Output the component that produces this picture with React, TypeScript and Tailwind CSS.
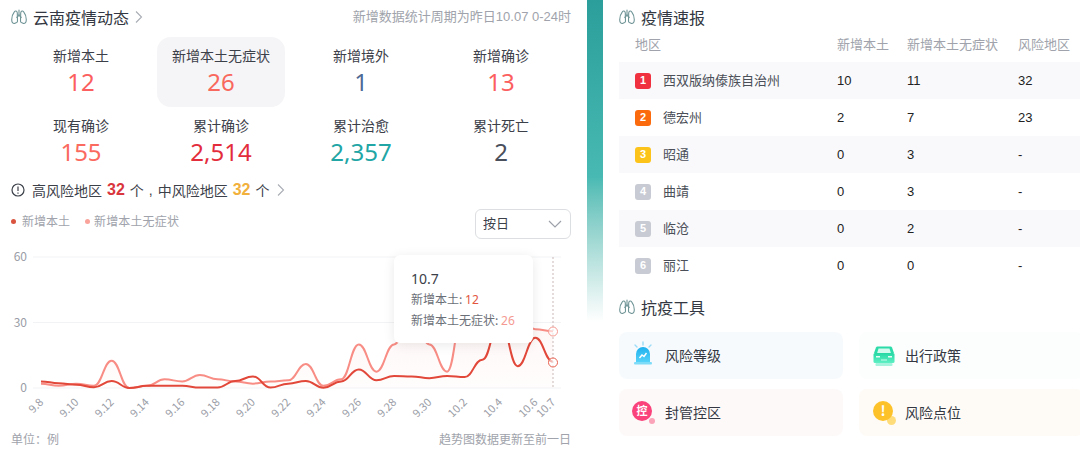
const lineData = {
  dark: [3, 2.2, 1.5, 0.3, 3.2, 0, 1, 1, 1, 0.2, 0.2, 3.2, 5.3, 0.2, 2, 3.2, 0.1, 3, 8.5, 3.5, 5.5, 5.3, 4.5, 5.5, 5, 13, 31, 10, 23, 12],
  light: [2, 1, 2, 1, 12.5, 0, 1, 4, 3, 6, 4, 3, 2, 3, 3.5, 11, 1, 4, 20, 7.5, 20, 34, 20, 7.5, 40, 50, 48, 32, 27, 26],
};
const xTicks = ["9.8", "9.10", "9.12", "9.14", "9.16", "9.18", "9.20", "9.22", "9.24", "9.26", "9.28", "9.30", "10.2", "10.4", "10.6"];
const stats = [
  { label: "新增本土", value: "12", color: "text-[#fb5f5f]" },
  { label: "新增本土无症状", value: "26", color: "text-[#f9685d]", active: true },
  { label: "新增境外", value: "1", color: "text-[#4d6a95]" },
  { label: "新增确诊", value: "13", color: "text-[#fb5f5f]" },
  { label: "现有确诊", value: "155", color: "text-[#fb6a5f]" },
  { label: "累计确诊", value: "2,514", color: "text-[#e32d3c]" },
  { label: "累计治愈", value: "2,357", color: "text-[#22a5a5]" },
  { label: "累计死亡", value: "2", color: "text-[#4a4f5c]" },
];
const rows = [
  { rank: 1, badge: "bg-[#f0313f]", name: "西双版纳傣族自治州", a: "10", b: "11", c: "32" },
  { rank: 2, badge: "bg-[#fb6a0c]", name: "德宏州", a: "2", b: "7", c: "23" },
  { rank: 3, badge: "bg-[#fcc41a]", name: "昭通", a: "0", b: "3", c: "-" },
  { rank: 4, badge: "bg-[#c8cbd3]", name: "曲靖", a: "0", b: "3", c: "-" },
  { rank: 5, badge: "bg-[#c8cbd3]", name: "临沧", a: "0", b: "2", c: "-" },
  { rank: 6, badge: "bg-[#c8cbd3]", name: "丽江", a: "0", b: "0", c: "-" },
];

const X0 = 41;
const STEP = 17.655;
const Y0 = 148;
const UNIT = 2.18;

function smoothPath(values: number[]) {
  const pts = values.map((v, i) => [X0 + i * STEP, Y0 - v * UNIT]);
  let d = `M${pts[0][0]} ${pts[0][1]}`;
  for (let i = 0; i < pts.length - 1; i++) {
    const p1 = pts[i];
    const p2 = pts[i + 1];
    const cx = STEP * 0.45;
    d += ` C${p1[0] + cx} ${p1[1]} ${p2[0] - cx} ${p2[1]} ${p2[0]} ${p2[1]}`;
  }
  return d;
}

function Lungs() {
  return (
    <svg width="16" height="16" viewBox="0 0 16 16" fill="none" stroke="#6f9496" strokeWidth="1.100" strokeLinecap="round" strokeLinejoin="round" className="shrink-0">
      <path d="M8 1v4.500c0 1.500-1.200 2-2.200 2.800" />
      <path d="M8 5.500c0 1.500 1.200 2 2.200 2.800" />
      <path d="M6.300 3.800C6 1.800 4.300 1.500 3.300 2.800 1.500 5 .7 7.700 .7 10.800c0 3 1.600 4.200 3.300 3.500l1.600-.7c.6-.3.900-.7.900-1.400z" />
      <path d="M9.700 3.800c.3-2 2-2.300 3-1C14.500 5 15.300 7.700 15.300 10.800c0 3-1.600 4.200-3.300 3.500l-1.600-.7c-.6-.3-.9-.7-.9-1.400z" />
    </svg>
  );
}

function Chevron({ className = "" }: { className?: string }) {
  return (
    <svg width="8" height="14" viewBox="0 0 8 14" fill="none" stroke="#a9adb4" strokeWidth="1.100" className={className}>
      <path d="M1 1.500 6.500 7 1 12.500" />
    </svg>
  );
}

function Chart() {
  return (
    <svg width="587" height="190" viewBox="0 0 587 190" className="block">
      <defs>
        <linearGradient id="areaFill" x1="0" y1="0" x2="0" y2="1">
          <stop offset="0" stopColor="#fb8a80" stopOpacity="0.1" />
          <stop offset="1" stopColor="#fb8a80" stopOpacity="0.02" />
        </linearGradient>
      </defs>
      {[17, 82.5, 148].map((y) => (
        <line key={y} x1="33" x2="561" y1={y} y2={y} stroke="#f2f3f5" />
      ))}
      {[["60", 21], ["30", 87], ["0", 152]].map(([t, y]) => (
        <text key={t} x="27" y={y} textAnchor="end" fontSize="12" fill="#9a9da6">{t}</text>
      ))}
      <path d={`${smoothPath(lineData.light)} L${X0 + 29 * STEP} ${Y0} L${X0} ${Y0} Z`} fill="url(#areaFill)" />
      <path d={smoothPath(lineData.light)} fill="none" stroke="#f88d85" strokeWidth="2" />
      <path d={smoothPath(lineData.dark)} fill="none" stroke="#e2483a" strokeWidth="2" />
      <line x1="553" x2="553" y1="17" y2="148" stroke="#c9b8b8" strokeDasharray="2 2" />
      <circle cx="553" cy="91.500" r="4.500" fill="#fff" fillOpacity="0.6" stroke="#f59a92" />
      <circle cx="553" cy="122.500" r="4.500" fill="#fff" fillOpacity="0.6" stroke="#e8604f" />
      {xTicks.map((t, i) => {
        const x = X0 + i * 2 * STEP;
        return (
          <text key={t} x={x + 3} y="163" textAnchor="end" fontSize="11" fill="#9a9da6" transform={`rotate(-45 ${x + 3} 163)`}>{t}</text>
        );
      })}
      <text x="556" y="163" textAnchor="end" fontSize="11" fill="#9a9da6" transform="rotate(-45 556 163)">10.7</text>
    </svg>
  );
}

function ToolIcon({ kind }: { kind: string }) {
  if (kind === "alarm") {
    return (
      <svg width="22" height="26" viewBox="0 0 22 26" className="-my-[2px] -mt-[5px] shrink-0">
        <defs>
          <linearGradient id="alarmFill" x1="0" y1="0" x2="0" y2="1">
            <stop offset="0" stopColor="#1fb0ee" />
            <stop offset="1" stopColor="#55d2f8" />
          </linearGradient>
        </defs>
        <path d="M10 1v3M2 4l2 2M18 4l-2 2" stroke="#9bdcf6" strokeWidth="1.400" strokeLinecap="round" />
        <path d="M3 21V13a7 7 0 0 1 14 0v8z" fill="url(#alarmFill)" />
        <rect x="1" y="21" width="18" height="2.500" rx="1" fill="#7fdcf9" />
        <path d="M6.500 17l2.500-3 2 1.500 2.500-3.500" stroke="#fff" strokeWidth="1.400" fill="none" />
      </svg>
    );
  }
  if (kind === "car") {
    return (
      <svg width="22" height="22" viewBox="0 0 22 22" className="shrink-0">
        <defs>
          <linearGradient id="carFill" x1="0" y1="0" x2="0" y2="1">
            <stop offset="0" stopColor="#25d8a4" />
            <stop offset="1" stopColor="#5ff0c4" />
          </linearGradient>
        </defs>
        <path d="M4.500 1.500h13c.8 0 1.200.4 1.500 1l2 5.500H1l2-5.500c.3-.6.700-1 1.500-1z" fill="#2bdca8" />
        <path d="M5.500 3.500h11l1.400 4.500H4.100z" fill="#d4f9ee" />
        <rect x="0.500" y="8" width="21" height="10" rx="1.500" fill="url(#carFill)" />
        <rect x="2.500" y="18" width="17" height="3" rx="1" fill="#a5f3dc" />
        <rect x="3" y="11" width="4" height="1.500" fill="#e7fdf6" />
        <rect x="15" y="11" width="4" height="1.500" fill="#e7fdf6" />
        <rect x="8" y="14.500" width="6" height="1" fill="#c9f7e9" />
      </svg>
    );
  }
  if (kind === "seal") {
    return (
      <div className="relative h-[22px] w-[22px] shrink-0">
        <div className="absolute right-0 bottom-0 h-[6px] w-[6px] rounded-full bg-[#fba3b8]" />
        <div className="absolute -top-[1px] -left-[1px] flex h-[20px] w-[20px] items-center justify-center rounded-full bg-[#f9437a] text-[11px] font-bold text-white">控</div>
      </div>
    );
  }
  return (
    <div className="relative h-[22px] w-[22px] shrink-0">
      <div className="absolute -right-[1px] -bottom-[1px] h-[9px] w-[9px] rounded-full bg-[#ffdc7a]" />
      <div className="absolute -top-[1px] left-0 flex h-[20px] w-[20px] items-center justify-center rounded-full bg-[#fdc22a] text-[14px] font-bold text-white">!</div>
    </div>
  );
}

function Tool({ kind, label, bg }: { kind: string; label: string; bg: string }) {
  return (
    <div className={`flex h-[47px] items-center gap-[10px] rounded-[8px] pl-[14px] ${bg}`}>
      <ToolIcon kind={kind} />
      <span className="text-[14px] text-[#333842]">{label}</span>
    </div>
  );
}

export default function App() {
  return (
    <div className="flex h-[472px] w-[1080px] overflow-hidden bg-white font-['Noto_Sans_CJK_SC','Noto_Sans',sans-serif]">
      <section className="flex w-[587px] shrink-0 flex-col">
        <header className="flex h-[34px] items-center pr-[16px] pl-[11px]">
          <Lungs />
          <h2 className="ml-[6px] text-[16px] text-[#333842]">云南疫情动态</h2>
          <Chevron className="ml-[6px]" />
          <span className="ml-auto font-['Liberation_Sans','Noto_Sans_CJK_SC',sans-serif] text-[13px] text-[#a0a3ab]">新增数据统计周期为昨日10.07 0-24时</span>
        </header>
        <div className="mt-[3px] ml-[11px] grid w-[560px] grid-cols-4">
          {stats.map((s) => (
            <div key={s.label} className={`mx-[6px] flex h-[70px] flex-col items-center pt-[8px] ${s.active ? "rounded-[14px] bg-[#f5f5f7]" : ""}`}>
              <span className="text-[14px] leading-[20px] text-[#3c4049]">{s.label}</span>
              <span className={`font-['Noto_Sans',sans-serif] text-[24px] leading-[33px] ${s.color}`}>{s.value}</span>
            </div>
          ))}
        </div>
        <div className="mt-[2px] flex h-[22px] items-center pl-[11px] text-[14px] text-[#3c4049]">
          <svg width="14" height="14" viewBox="0 0 14 14" fill="none" stroke="#3c4049" strokeWidth="1.200" className="mr-[7px]">
            <circle cx="7" cy="7" r="6" />
            <path d="M7 3.500v4.500M7 9.500v1.200" />
          </svg>
          <span>高风险地区</span>
          <b className="mx-[5px] font-['Liberation_Sans',sans-serif] text-[16px] text-[#d9363e]">32</b>
          <span>个</span>
          <span className="mx-[5px] font-['Liberation_Sans',sans-serif]">,</span>
          <span>中风险地区</span>
          <b className="mx-[5px] font-['Liberation_Sans',sans-serif] text-[16px] text-[#f2b03c]">32</b>
          <span>个</span>
          <Chevron className="ml-[8px]" />
        </div>
        <div className="mt-[8px] flex h-[30px] items-center pr-[16px] pl-[11px] text-[12px] text-[#a0a3ab]">
          <div className="flex items-center pb-[6px]">
            <i className="mr-[6px] h-[5px] w-[5px] rounded-full bg-[#d9533f]" />
            <span className="mr-[15px]">新增本土</span>
            <i className="mr-[4px] h-[5px] w-[5px] rounded-full bg-[#f9a39b]" />
            <span className="text-[12px] tracking-[0.15px]">新增本土无症状</span>
          </div>
          <div className="ml-auto flex h-[30px] w-[96px] items-center justify-between rounded-[6px] border border-[#dcdee2] pr-[8px] pl-[7px] text-[13px] text-[#3c4049]">
            <span className="pb-[3px]">按日</span>
            <svg width="14" height="8" viewBox="0 0 14 8" fill="none" stroke="#9da1a9" strokeWidth="1.200"><path d="M1 1l6 6 6-6" /></svg>
          </div>
        </div>
        <div className="relative mt-[1px]">
          <Chart />
          <div className="absolute top-[15px] left-[394px] h-[88px] w-[139px] rounded-[6px] bg-white px-[17px] pt-[14px] shadow-[0_2px_12px_rgba(0,0,0,0.09)]">
            <div className="font-['Noto_Sans',sans-serif] text-[14px] leading-[20px] text-[#3c4049]">10.7</div>
            <div className="text-[12px] leading-[20px] text-[#6b6f78]">新增本土: <span className="font-['Noto_Sans',sans-serif] text-[#e2563f]">12</span></div>
            <div className="text-[12px] leading-[20px] text-[#6b6f78]">新增本土无症状: <span className="font-['Noto_Sans',sans-serif] text-[#f59a92]">26</span></div>
          </div>
        </div>
        <footer className="flex items-center justify-between pr-[16px] pl-[11px] text-[12px] text-[#a0a3ab]">
          <span>单位：例</span>
          <span>趋势图数据更新至前一日</span>
        </footer>
      </section>

      <div className="h-[322px] w-[16px] shrink-0 bg-gradient-to-b from-[#2b9e9b] via-[#48bab3] via-55% to-[#ffffff]" />

      <section className="flex min-w-0 flex-1 flex-col pl-[16px]">
        <header className="flex h-[34px] items-center">
          <Lungs />
          <h2 className="ml-[6px] text-[16px] text-[#333842]">疫情速报</h2>
        </header>
        <div className="grid h-[19px] grid-cols-[202px_70px_111px_1fr] items-center pl-[16px] text-[13px] text-[#a0a3ab]">
          <span>地区</span>
          <span>新增本土</span>
          <span>新增本土无症状</span>
          <span className="whitespace-nowrap">风险地区</span>
        </div>
        <div className="mt-[9px]">
          {rows.map((r) => (
            <div key={r.rank} className={`grid h-[37px] grid-cols-[202px_70px_111px_1fr] items-center pl-[16px] font-['Liberation_Sans',sans-serif] text-[13px] text-[#222] ${r.rank % 2 ? "bg-[#f9f9fb]" : ""}`}>
              <div className="flex items-center">
                <span className={`flex h-[16px] w-[16px] items-center justify-center rounded-[3px] text-[11px] font-bold text-white ${r.badge}`}>{r.rank}</span>
                <span className="ml-[12px] pb-[2px] font-['Noto_Sans_CJK_SC',sans-serif] text-[#4b4f58]">{r.name}</span>
              </div>
              <span>{r.a}</span>
              <span>{r.b}</span>
              <span>{r.c}</span>
            </div>
          ))}
        </div>
        <header className="mt-[6px] flex h-[34px] items-center">
          <Lungs />
          <h2 className="ml-[6px] text-[16px] text-[#333842]">抗疫工具</h2>
        </header>
        <div className="mt-[8px] mr-[-4px] grid grid-cols-[224px_1fr] gap-x-[16px] gap-y-[10px]">
          <Tool kind="alarm" label="风险等级" bg="bg-[#f7fafd]" />
          <Tool kind="car" label="出行政策" bg="bg-[#fcfdfd]" />
          <Tool kind="seal" label="封管控区" bg="bg-[#fef9f9]" />
          <Tool kind="warn" label="风险点位" bg="bg-[#fefbf7]" />
        </div>
      </section>
    </div>
  );
}
